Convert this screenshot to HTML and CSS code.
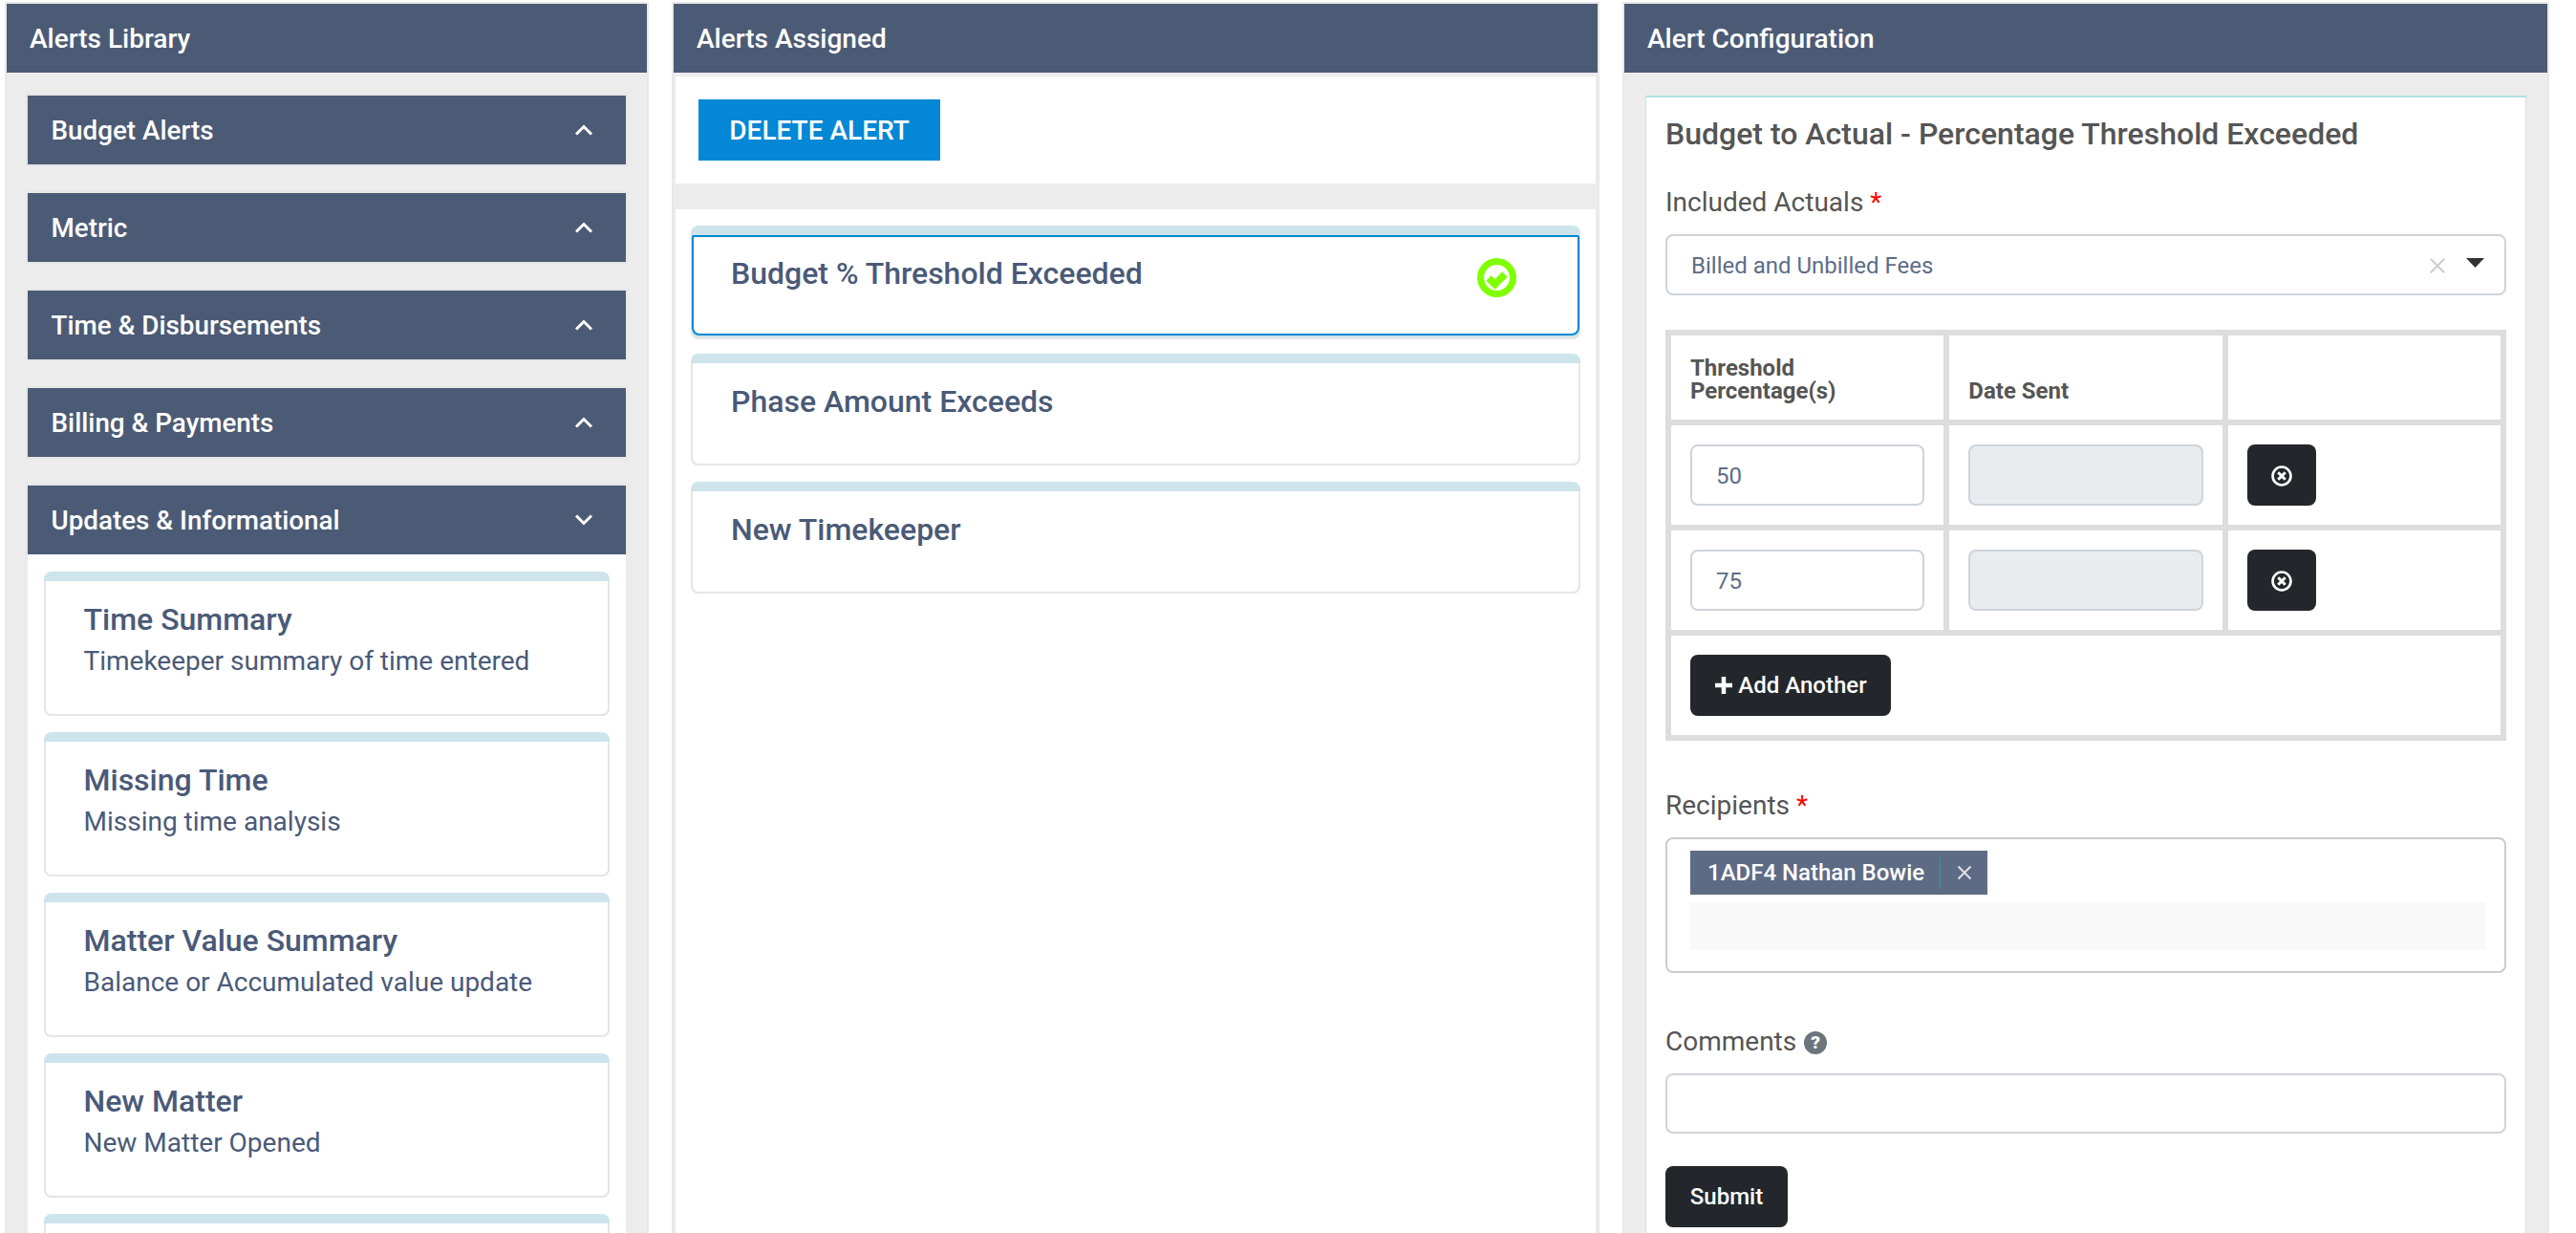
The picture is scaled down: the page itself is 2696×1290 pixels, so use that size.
FILE: index.html
```html
<!DOCTYPE html>
<html lang="en">
<head>
<meta charset="utf-8">
<title>Alerts</title>
<link rel="stylesheet" href="styles.css">
</head>
<body>
<main class="page">
  <section class="col col-library">
    <h2 class="col-head">Alerts Library</h2>
    <div class="library-body">
      <div class="acc">Budget Alerts<svg class="chev" viewBox="0 0 20 12"><path d="M2 10.5 10 2.5l8 8"/></svg></div>
      <div class="acc">Metric<svg class="chev" viewBox="0 0 20 12"><path d="M2 10.5 10 2.5l8 8"/></svg></div>
      <div class="acc">Time &amp; Disbursements<svg class="chev" viewBox="0 0 20 12"><path d="M2 10.5 10 2.5l8 8"/></svg></div>
      <div class="acc">Billing &amp; Payments<svg class="chev" viewBox="0 0 20 12"><path d="M2 10.5 10 2.5l8 8"/></svg></div>
      <div class="acc acc-open">Updates &amp; Informational<svg class="chev" viewBox="0 0 20 12"><path d="M2 1.5l8 8 8-8"/></svg></div>
      <div class="acc-panel">
        <article class="card card-lib"><div class="card-body"><h3 class="card-title">Time Summary</h3><p class="card-sub">Timekeeper summary of time entered</p></div></article>
        <article class="card card-lib"><div class="card-body"><h3 class="card-title">Missing Time</h3><p class="card-sub">Missing time analysis</p></div></article>
        <article class="card card-lib"><div class="card-body"><h3 class="card-title">Matter Value Summary</h3><p class="card-sub">Balance or Accumulated value update</p></div></article>
        <article class="card card-lib"><div class="card-body"><h3 class="card-title">New Matter</h3><p class="card-sub">New Matter Opened</p></div></article>
        <article class="card card-lib"><div class="card-body"></div></article>
      </div>
    </div>
  </section>

  <section class="col col-assigned">
    <h2 class="col-head">Alerts Assigned</h2>
    <div class="assigned-actions"><button class="btn-delete" type="button">DELETE ALERT</button></div>
    <div class="assigned-list">
      <article class="card card-asg card-selected"><div class="card-body"><h3 class="card-title">Budget % Threshold Exceeded</h3>
        <svg class="check-icon" viewBox="0 0 41 41"><circle cx="20.5" cy="20.5" r="17" /><path d="M12 21l6.5 6.5L29 17"/></svg></div></article>
      <article class="card card-asg"><div class="card-body"><h3 class="card-title">Phase Amount Exceeds</h3></div></article>
      <article class="card card-asg"><div class="card-body"><h3 class="card-title">New Timekeeper</h3></div></article>
    </div>
  </section>

  <section class="col col-config">
    <h2 class="col-head">Alert Configuration</h2>
    <div class="config-body">
      <form class="config-card">
        <h3 class="config-title">Budget to Actual - Percentage Threshold Exceeded</h3>
        <div class="field-label label-actuals">Included Actuals <span class="req">*</span></div>
        <div class="select-box">
          <span class="select-value">Billed and Unbilled Fees</span>
          <svg class="select-x" viewBox="0 0 20 20"><path d="M2 2l16 16M18 2 2 18"/></svg>
          <svg class="select-caret" viewBox="0 0 19 10"><path d="M0 0h19L9.5 10z"/></svg>
        </div>
        <div class="thresholds">
          <div class="th-cell th-head">Threshold<br>Percentage(s)</div>
          <div class="th-cell th-head">Date Sent</div>
          <div class="th-cell"></div>

          <div class="th-cell"><input class="text-input" value="50"></div>
          <div class="th-cell"><input class="text-input" disabled></div>
          <div class="th-cell"><button class="btn-dark btn-remove" type="button" aria-label="Remove"><svg class="x-circle" viewBox="0 0 20 20"><circle cx="10" cy="10" r="8.6"/><path d="M6.6 6.6l6.8 6.8M13.4 6.6l-6.8 6.8"/></svg></button></div>

          <div class="th-cell"><input class="text-input" value="75"></div>
          <div class="th-cell"><input class="text-input" disabled></div>
          <div class="th-cell"><button class="btn-dark btn-remove" type="button" aria-label="Remove"><svg class="x-circle" viewBox="0 0 20 20"><circle cx="10" cy="10" r="8.6"/><path d="M6.6 6.6l6.8 6.8M13.4 6.6l-6.8 6.8"/></svg></button></div>

          <div class="th-cell th-wide"><button class="btn-dark btn-add" type="button"><svg class="plus" viewBox="0 0 20 20"><path d="M10 1v18M1 10h18"/></svg>Add Another</button></div>
        </div>
        <div class="field-label label-recipients">Recipients <span class="req">*</span></div>
        <div class="recipients">
          <div class="tag"><span class="tag-name">1ADF4 Nathan Bowie</span><span class="tag-x"><svg viewBox="0 0 16 16"><path d="M1.5 1.5l13 13M14.5 1.5l-13 13"/></svg></span></div>
          <div class="recipients-input"></div>
        </div>
        <div class="field-label label-comments">Comments <span class="help">?</span></div>
        <input class="text-input comments-input">
        <button class="btn-dark btn-submit" type="button">Submit</button>
      </form>
    </div>
  </section>
</main>
</body>
</html>
```
FILE: styles.css
```css
* { box-sizing: border-box; }
html, body { margin: 0; height: 1290px; overflow: hidden; }
body { background: #fff; font-family: Roboto, "Liberation Sans", sans-serif; }
.page { display: flex; gap: 28px; height: 1290px; padding: 4px 0 0 7px; overflow: hidden; }
.col { background: #ececec; box-shadow: 0 0 0 2px #e8e8e8; height: 1286px; flex: none; overflow: hidden; }
.col-library { width: 670px; }
.col-assigned { width: 967px; }
.col-config { width: 966px; }
.col-head { margin: 0; height: 72px; padding-left: 24px; background: #4c5b75; color: #fff; font-size: 28px; font-weight: 500; line-height: 74px; }

.library-body { padding: 24px 22px 0; }
.acc { display: flex; justify-content: space-between; align-items: center; height: 72px; margin-bottom: 30px; padding: 0 34px 0 24.5px; background: #4c5b75; color: #fff; font-size: 27.8px; font-weight: 500; box-shadow: 0 0 0 2px #e6e6e6; }
.acc-open { margin-bottom: 0; }
.chev { width: 20px; height: 12px; fill: none; stroke: #fff; stroke-width: 3; }
.acc-panel { background: #fff; padding: 18px 17px 0 16.5px; }

.card { background: #cde4ec; border-radius: 8px; padding-top: 10px; margin-bottom: 17px; }
.card-body { position: relative; height: 100%; padding: 22px 0 0 40px; background: #fff; border: 2px solid #e6e6e6; border-top: 0; border-radius: 0 0 8px 8px; }
.card-title { margin: 0; color: #4a5a78; font-size: 32px; font-weight: 500; line-height: 36px; }
.card-sub { margin: 6px 0 0; color: #4a5a78; font-size: 28px; line-height: 40px; }
.card-lib { height: 151px; }
.card-asg { height: 117px; }
.card-selected .card-body { margin: 0 1px; border: 2px solid #0487d4; border-radius: 2px 2px 8px 8px; padding: 20px 0 0 39px; height: 105px; }
.card-selected { box-shadow: 0 2px 0 #e6e6e6; }
.check-icon { position: absolute; right: 64px; top: 22px; width: 41px; height: 41px; fill: none; stroke: #7fff00; stroke-width: 7; }
.check-icon path { stroke-width: 7.5; }

.col-assigned .col-head { margin-bottom: 4px; }
.assigned-actions { margin: 0 2px; padding: 24px; background: #fff; height: 112px; }
.btn-delete { display: block; width: 253px; height: 64px; padding: 0; border: 0; background: #0487d4; color: #fff; font: 500 28px Roboto, sans-serif; }
.assigned-list { margin: 27px 2px 0; padding: 17px 16px 0 16px; background: #fff; height: 1100px; }

.config-body { padding: 24px 22px 0; }
.config-card { background: #fff; border: 1px solid #c5e3ea; border-top: 2px solid #b3dfe8; padding: 18px 20px 0 20px; height: 1300px; }
.config-title { margin: 0; color: #555; font-size: 32px; font-weight: 500; line-height: 40px; }
.field-label { color: #555; font-size: 28px; line-height: 40px; }
.label-actuals { margin-top: 32px; }
.label-recipients { margin-top: 48px; }
.label-comments { margin-top: 52px; }
.req { color: #f00; }
.select-box { display: flex; align-items: center; height: 64px; margin-top: 13px; padding: 2px 25px 0; background: #fff; border: 2px solid #ced4da; border-radius: 8px; }
.select-value { flex: 1; color: #5d6d87; font-size: 24px; }
.select-x { width: 18px; height: 18px; fill: none; stroke: #ccc; stroke-width: 2.2; margin-right: 21px; }
.select-caret { width: 19px; height: 10px; fill: #333; margin: -6px -4px 0 0; }

.thresholds { display: grid; grid-template-columns: repeat(3, 1fr); grid-template-rows: 88px 104px 104px 104px; gap: 6px; width: 880px; margin-top: 36px; padding: 6px; background: #ddd; }
.th-cell { background: #fff; padding: 20px; }
.th-head { display: flex; align-items: flex-end; padding: 0 20px 18px; color: #555; font-size: 24px; font-weight: 700; line-height: 24px; }
.th-wide { grid-column: 1 / -1; }
.text-input { display: block; width: 100%; height: 64px; padding: 2px 25px 0; background: #fff; border: 2px solid #ced4da; border-radius: 8px; color: #5d6d87; font: 24px Roboto, sans-serif; }
.text-input:disabled { background: #e9ecef; }
.btn-dark { display: inline-flex; align-items: center; justify-content: center; height: 64px; padding: 0; border: 0; border-radius: 8px; background: #23272b; color: #fff; font: 500 24px Roboto, sans-serif; }
.btn-remove { width: 72px; padding-top: 2px; }
.x-circle { width: 22px; height: 22px; fill: none; stroke: #fff; stroke-width: 2.4; }
.x-circle path { stroke-width: 2.8; }
.btn-add { width: 210px; }
.plus { width: 20px; height: 20px; margin-right: 5px; fill: none; stroke: #fff; stroke-width: 4.5; }
.recipients { height: 142px; margin-top: 13px; padding: 12px 20px 0 24px; border: 2px solid #ccc; border-radius: 8px; }
.tag { display: inline-flex; align-items: center; height: 46px; background: #5e6b85; color: #fff; font-size: 24px; font-weight: 500; vertical-align: top; }
.tag-name { padding: 0 16px 0 18px; height: 34px; line-height: 34px; border-right: 1px solid #4d8ba0; }
.tag-x { display: flex; width: 49px; justify-content: center; }
.tag-x svg { width: 16px; height: 16px; fill: none; stroke: #e0e0e8; stroke-width: 2; }
.recipients-input { height: 50px; margin-top: 8px; background: #f9f9f9; }
.help { display: inline-block; width: 24px; height: 24px; margin-left: 1px; border-radius: 50%; background: #6c757d; color: #fff; font-size: 19px; font-weight: 900; line-height: 24px; text-align: center; vertical-align: 2px; }
.comments-input { margin-top: 13px; height: 63px; }
.btn-submit { display: flex; width: 128px; margin-top: 34px; }
```
